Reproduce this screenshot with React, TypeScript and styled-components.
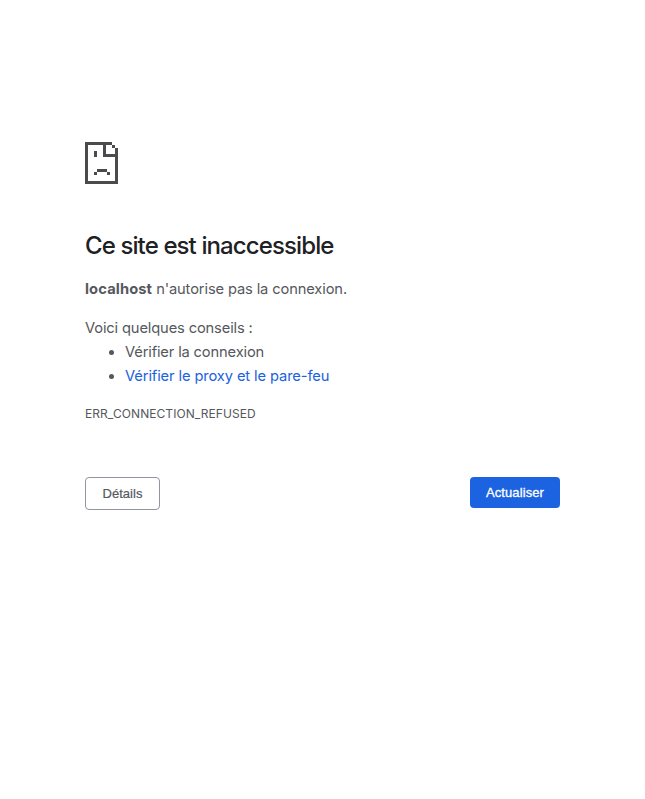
import React from "react";
import styled, { createGlobalStyle } from "styled-components";

const GlobalStyle = createGlobalStyle`
  body {
    margin: 0;
    background: #fff;
    color: #55585d;
    font-family: Inter, "Liberation Sans", sans-serif;
    font-size: 15px;
    line-height: 24px;
  }
`;

const Page = styled.main`
  box-sizing: border-box;
  width: 475px;
  margin: 0 auto;
  padding-top: 142px;
`;

const SadPage = styled.svg`
  display: block;
  width: 33px;
  height: 42px;
`;

const Title = styled.h1`
  margin: 47px 0 16px;
  color: #202124;
  font-size: 24px;
  font-weight: 500;
  line-height: 30px;
  letter-spacing: -0.89px;
  white-space: nowrap;
`;

const Line = styled.p<{ $gap?: number; $spacing?: number }>`
  margin: 0 0 ${(p) => p.$gap ?? 0}px;
  font-size: 14.7px;
  letter-spacing: ${(p) => p.$spacing ?? 0}px;
  white-space: nowrap;
`;

const Host = styled.strong`
  font-weight: 700;
  letter-spacing: 0.12px;
`;

const Tips = styled.ul`
  margin: 0;
  padding: 0 0 0 40px;
  font-size: 14.7px;
  letter-spacing: -0.15px;
`;

const TipLink = styled.a`
  color: #1a62e0;
  font-weight: 400;
  letter-spacing: -0.11px;
  text-decoration: none;
`;

const ErrorCode = styled.div`
  margin-top: 14px;
  font-size: 12px;
  letter-spacing: 0.07px;
`;

const Actions = styled.div`
  display: flex;
  justify-content: space-between;
  align-items: flex-start;
  margin-top: 51px;
`;

const Button = styled.button<{ $primary?: boolean }>`
  box-sizing: border-box;
  width: ${(p) => (p.$primary ? 90 : 75)}px;
  height: ${(p) => (p.$primary ? 31 : 33)}px;
  padding: 0;
  border: ${(p) => (p.$primary ? "0" : "1px solid #9195a0")};
  border-radius: 4px;
  background: ${(p) => (p.$primary ? "#1b63e0" : "#fff")};
  color: ${(p) => (p.$primary ? "#fff" : "#55585d")};
  font: 13px "Liberation Sans", Arial, sans-serif;
  letter-spacing: ${(p) => (p.$primary ? 0.1 : 0.05)}px;
  -webkit-text-stroke: ${(p) => (p.$primary ? 0.3 : 0.2)}px currentColor;
`;

export default function App() {
  return (
    <>
      <GlobalStyle />
      <Page>
        <SadPage viewBox="0 0 33 42" fill="#4b4b4d" shapeRendering="crispEdges" aria-hidden="true">
          <path d="M0 0H27V3H21V12H30V6H33V42H0ZM3 3V39H30V15H18V3Z" fillRule="evenodd" />
          <path d="M27 3h3v3h-3zM9 9h3v6H9zM12 27h10v3H12zM9 30h3v3H9zM22 30h3v3h-3z" />
        </SadPage>
        <Title>Ce site est inaccessible</Title>
        <Line $gap={15} $spacing={-0.13}>
          <Host>localhost</Host> n'autorise pas la connexion.
        </Line>
        <Line $spacing={-0.14}>Voici quelques conseils :</Line>
        <Tips>
          <li>Vérifier la connexion</li>
          <li>
            <TipLink href="#buttons">Vérifier le proxy et le pare-feu</TipLink>
          </li>
        </Tips>
        <ErrorCode>ERR_CONNECTION_REFUSED</ErrorCode>
        <Actions id="buttons">
          <Button>Détails</Button>
          <Button $primary>Actualiser</Button>
        </Actions>
      </Page>
    </>
  );
}
